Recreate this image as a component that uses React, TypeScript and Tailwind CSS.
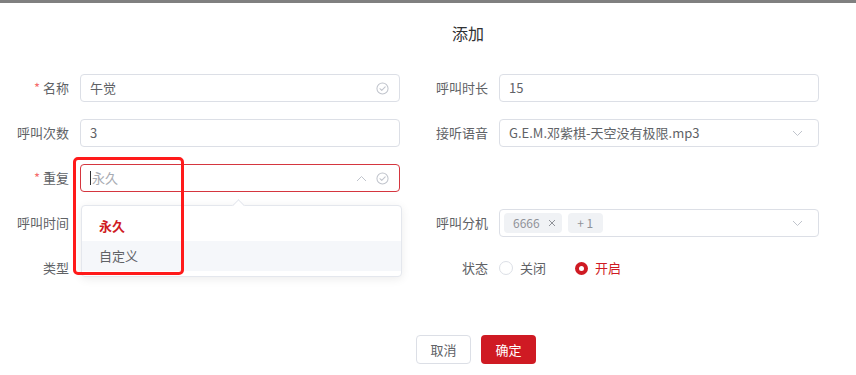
import React from "react";

const font = { fontFamily: '"Noto Sans CJK SC", "Noto Sans", sans-serif' };

function CheckCircle() {
  return (
    <svg width="13" height="13" viewBox="0 0 14 14" fill="none" stroke="#c0c4cc" strokeWidth="1.1">
      <circle cx="7" cy="7" r="6" />
      <path d="M4.2 7.2 L6.2 9.1 L9.9 5.2" strokeLinecap="round" strokeLinejoin="round" />
    </svg>
  );
}

function Chevron({ up = false }: { up?: boolean }) {
  return (
    <svg width="11" height="7" viewBox="0 0 11 7" fill="none" stroke="#c0c4cc" strokeWidth="1">
      {up ? <path d="M1 6 L5.5 1.5 L10 6" /> : <path d="M1 1 L5.5 5.5 L10 1" />}
    </svg>
  );
}

function Label({ text, req = false, w }: { text: string; req?: boolean; w: string }) {
  return (
    <div className={`${w} shrink-0 flex items-center justify-end pr-[11px] text-[13px] text-[#606266]`}>
      {req && <span className="text-[#f56c6c] mr-[3px]">*</span>}
      {text}
    </div>
  );
}

function Input({ children, red = false }: { children?: React.ReactNode; red?: boolean }) {
  return (
    <div
      className={`w-[320px] h-[28px] rounded-[4px] border ${red ? "border-[#d5363f]" : "border-[#dcdfe6]"} flex items-center pl-[9px] pr-[10px] text-[13px] text-[#606266]`}
    >
      {children}
    </div>
  );
}

export default function App() {
  return (
    <div className="w-[856px] h-[375px] bg-white relative overflow-hidden" style={font}>
      <div className="h-[3px] bg-[#808080]" />
      <div className="h-[60px] flex items-center justify-center pl-[80px] text-[16px] text-[#303133]">添加</div>

      <div className="mt-[11px] flex flex-col gap-[17px]">
        <div className="flex h-[28px]">
          <Label text="名称" req w="w-[80px]" />
          <Input>
            <span className="flex-1">午觉</span>
            <CheckCircle />
          </Input>
          <div className="w-[20px]" />
          <Label text="呼叫时长" w="w-[79px]" />
          <Input>
            <span>15</span>
          </Input>
        </div>

        <div className="flex h-[28px]">
          <Label text="呼叫次数" w="w-[80px]" />
          <Input>
            <span>3</span>
          </Input>
          <div className="w-[20px]" />
          <Label text="接听语音" w="w-[79px]" />
          <Input>
            <span className="flex-1">G.E.M.邓紫棋-天空没有极限.mp3</span>
            <span className="mr-[5px] flex"><Chevron /></span>
          </Input>
        </div>

        <div className="flex h-[28px]">
          <Label text="重复" req w="w-[80px]" />
          <Input red>
            <span className="w-px h-[14px] bg-[#303133] mr-px" />
            <span className="flex-1 text-[#a8abb2]">永久</span>
            <span className="mr-[9px] flex"><Chevron up /></span>
            <CheckCircle />
          </Input>
        </div>

        <div className="flex h-[28px]">
          <Label text="呼叫时间" w="w-[80px]" />
          <div className="w-[320px]" />
          <div className="w-[20px]" />
          <Label text="呼叫分机" w="w-[79px]" />
          <div className="w-[320px] h-[28px] rounded-[4px] border border-[#dcdfe6] flex items-center pl-[4px] pr-[10px] text-[12px] text-[#909399]">
            <span className="h-[20px] rounded-[4px] bg-[#f0f2f5] flex items-center pl-[9px] pr-[6px] gap-[8px]">
              6666
              <svg width="8" height="8" viewBox="0 0 8 8" stroke="#909399" strokeWidth="1"><path d="M1 1 L7 7 M7 1 L1 7" /></svg>
            </span>
            <span className="ml-[6px] h-[20px] w-[35px] rounded-[4px] bg-[#f0f2f5] flex items-center justify-center">+ 1</span>
            <span className="flex-1" />
            <span className="mr-[5px] flex"><Chevron /></span>
          </div>
        </div>

        <div className="flex h-[28px]">
          <Label text="类型" w="w-[80px]" />
          <div className="w-[320px]" />
          <div className="w-[20px]" />
          <Label text="状态" w="w-[79px]" />
          <div className="flex items-center text-[13px]">
            <span className="w-[14px] h-[14px] rounded-full border border-[#dcdfe6]" />
            <span className="ml-[7px] text-[#606266]">关闭</span>
            <span className="ml-[29px] w-[13px] h-[13px] rounded-full bg-[#cf1a23] flex items-center justify-center">
              <span className="w-[5px] h-[5px] rounded-full bg-white" />
            </span>
            <span className="ml-[7px] text-[#cf1a23]">开启</span>
          </div>
        </div>
      </div>

      <div className="mt-[53px] flex justify-center pl-[96px] gap-[10px]">
        <button className="w-[55px] h-[29px] rounded-[4px] border border-[#dcdfe6] bg-white text-[13px] text-[#606266]">取消</button>
        <button className="w-[55px] h-[29px] rounded-[4px] bg-[#cf1a23] text-[13px] text-white">确定</button>
      </div>

      {/* dropdown */}
      <div className="absolute left-[81px] top-[205px] w-[321px] h-[72px] bg-white border border-[#e4e7ed] rounded-[4px] shadow-[0_2px_10px_rgba(0,0,0,0.08)] py-[5px]">
        <div className="absolute -top-[5px] left-[152px] w-[9px] h-[9px] bg-white border-l border-t border-[#e4e7ed] rotate-45" />
        <div className="h-[30px] flex items-center pl-[17px] text-[13px] font-bold text-[#cf1a23]">永久</div>
        <div className="h-[30px] flex items-center pl-[17px] text-[13px] text-[#606266] bg-[#f5f7fa]">自定义</div>
      </div>

      {/* highlight box */}
      <div className="absolute left-[73px] top-[157px] w-[111px] h-[118px] border-[3px] border-[#ff1a1a] rounded-[5px]" />
    </div>
  );
}
